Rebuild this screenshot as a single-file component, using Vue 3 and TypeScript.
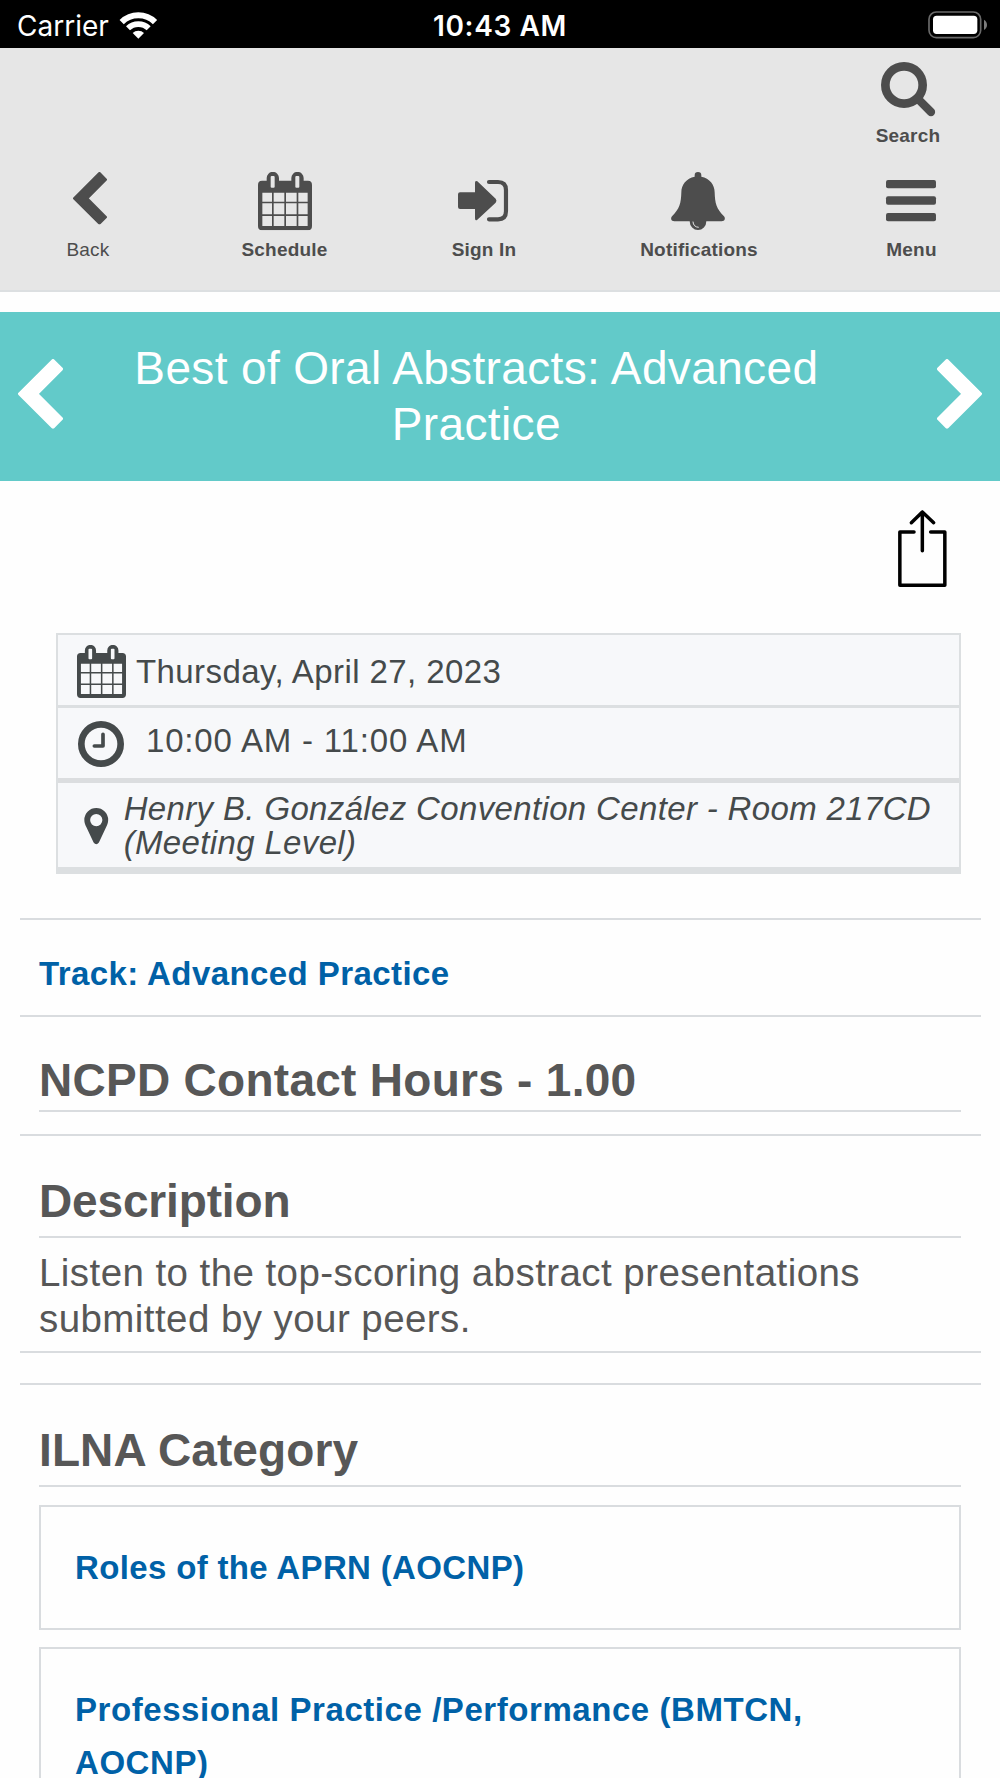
<script setup lang="ts">
interface NavItem {
  id: string
  label: string
  width: number
}

const navItems: NavItem[] = [
  { id: 'back', label: 'Back', width: 176 },
  { id: 'schedule', label: 'Schedule', width: 217 },
  { id: 'signin', label: 'Sign In', width: 182 },
  { id: 'notifications', label: 'Notifications', width: 248 },
  { id: 'menu', label: 'Menu', width: 177 },
]

const categories: string[] = [
  'Roles of the APRN (AOCNP)',
  'Professional Practice /Performance (BMTCN, AOCNP)',
]
</script>

<template>
  <div class="screen">
    <svg class="defs" width="0" height="0" aria-hidden="true">
      <symbol id="calendar" viewBox="0 0 162 175">
        <path
          fill="currentColor"
          fill-rule="evenodd"
          d="M12 26H26V18a18 18 0 0 1 37 0V26H100V18a18 18 0 0 1 37 0V26H150a12 12 0 0 1 12 12V163a12 12 0 0 1-12 12H12a12 12 0 0 1-12-12V38a12 12 0 0 1 12-12ZM38 15V44a3 3 0 0 0 3 3H47a3 3 0 0 0 3-3V15a3 3 0 0 0-3-3H41a3 3 0 0 0-3 3ZM112 15V44a3 3 0 0 0 3 3H121a3 3 0 0 0 3-3V15a3 3 0 0 0-3-3H115a3 3 0 0 0-3 3ZM13 62V89H42V62ZM47 62V89H79V62ZM84 62V89H116V62ZM121 62V89H149V62ZM13 94V127H42V94ZM47 94V127H79V94ZM84 94V127H116V94ZM121 94V127H149V94ZM13 132V162H42V132ZM47 132V162H79V132ZM84 132V162H116V132ZM121 132V162H149V132Z"
        />
      </symbol>
      <symbol id="chevron" viewBox="0 0 135 209">
        <path
          fill="currentColor"
          stroke="currentColor"
          stroke-width="10"
          stroke-linejoin="round"
          d="M105 5 130 30 56 104.500 130 179 105 204 5 104.500Z"
        />
      </symbol>
    </svg>

    <div class="status">
      <span class="carrier">Carrier</span>
      <svg class="wifi" viewBox="0 0 110 80">
        <g fill="none" stroke="#fff">
          <path stroke-width="18" d="M5 30A71 71 0 0 1 105 30" />
          <path stroke-width="17" d="M24 49A44 44 0 0 1 86 49" />
        </g>
        <path fill="#fff" d="M55 80 38 63A24 24 0 0 1 72 63Z" />
      </svg>
      <span class="clock-time">10:43 AM</span>
      <svg class="battery" viewBox="0 0 180 84">
        <rect x="3" y="3" width="155" height="77" rx="22" fill="none" stroke="#6a6a6a" stroke-width="5" />
        <rect x="15" y="14" width="133" height="55" rx="11" fill="#fff" />
        <path fill="#7c7c7c" d="M168 26C180 33 180 50 168 57Z" />
      </svg>
    </div>

    <header class="header">
      <div class="search">
        <svg class="search-icon" viewBox="0 0 164 163">
          <circle cx="69" cy="69" r="56" fill="none" stroke="currentColor" stroke-width="26" />
          <path d="M110 110 150 150" stroke="currentColor" stroke-width="25" stroke-linecap="round" />
        </svg>
        <span class="label">Search</span>
      </div>
      <nav class="nav">
        <div v-for="item in navItems" :key="item.id" class="nav-item" :style="{ width: item.width + 'px' }">
          <div class="nav-icon" :class="item.id">
            <svg v-if="item.id === 'back'"><use href="#chevron" /></svg>
            <svg v-else-if="item.id === 'schedule'"><use href="#calendar" /></svg>
            <svg v-else-if="item.id === 'signin'" viewBox="0 0 150 124">
              <path
                fill="currentColor"
                d="M6 37H51V8Q51 0 58 4L113 56Q118 62 113 68L58 119Q51 124 51 115V87H6Q0 87 0 81V43Q0 37 6 37Z"
              />
              <path
                d="M93 6H120Q144 6 144 30V94Q144 118 120 118H93"
                fill="none"
                stroke="currentColor"
                stroke-width="12.500"
                stroke-linecap="round"
              />
            </svg>
            <svg v-else-if="item.id === 'notifications'" viewBox="0 0 162 175">
              <path
                fill="currentColor"
                d="M81 0A10 10 0 0 1 91 10V14C116 19 131 38 131 61C132 94 136 110 159 133C164 139 162 148 152 148H106A25 26 0 0 1 56 148H10C0 148-2 139 3 133C26 110 30 94 31 61C31 38 46 19 71 14V10A10 10 0 0 1 81 0Z"
              />
              <path d="M66 150Q67 165 82 166" fill="none" stroke="#e6e6e6" stroke-width="3" stroke-linecap="round" />
            </svg>
            <svg v-else viewBox="0 0 150 124">
              <g fill="currentColor">
                <rect width="150" height="25" rx="6" />
                <rect y="49" width="150" height="25" rx="6" />
                <rect y="99" width="150" height="25" rx="6" />
              </g>
            </svg>
          </div>
          <span class="label" :class="{ plain: item.id === 'back' }">{{ item.label }}</span>
        </div>
      </nav>
    </header>

    <div class="banner">
      <svg class="arrow"><use href="#chevron" /></svg>
      <h1>Best of Oral Abstracts: Advanced Practice</h1>
      <svg class="arrow flip"><use href="#chevron" /></svg>
    </div>

    <div class="share-row">
      <svg class="share" viewBox="0 0 146 232">
        <g fill="none" stroke="#000" stroke-width="10.500" stroke-linecap="round" stroke-linejoin="round">
          <path d="M48 66H5.500V226H140.500V66H98" />
          <path d="M73 6V122M40 38 73 6 107 38" />
        </g>
      </svg>
    </div>

    <section class="info">
      <div class="info-row date">
        <svg class="cal"><use href="#calendar" /></svg>
        <span>Thursday, April 27, 2023</span>
      </div>
      <div class="info-row time">
        <svg class="clock" viewBox="0 0 138 138">
          <circle cx="69" cy="69" r="59" fill="none" stroke="currentColor" stroke-width="20" />
          <path
            d="M75 40V75H49"
            fill="none"
            stroke="currentColor"
            stroke-width="11"
            stroke-linecap="round"
            stroke-linejoin="round"
          />
        </svg>
        <span>10:00 AM - 11:00 AM</span>
      </div>
      <div class="info-row place">
        <svg class="pin" viewBox="0 0 74 110">
          <path
            fill="currentColor"
            fill-rule="evenodd"
            d="M37 0A36 36 0 0 1 73 36C73 45 70 51 67 57L45 104Q37 114 29 104L7 57C4 51 1 45 1 36A36 36 0 0 1 37 0ZM37 18A18.500 18.500 0 1 0 37 55A18.500 18.500 0 1 0 37 18Z"
          />
        </svg>
        <span>Henry B. González Convention Center - Room 217CD (Meeting Level)</span>
      </div>
    </section>

    <section class="block track">
      <a>Track: Advanced Practice</a>
    </section>
    <section class="block hours">
      <h2>NCPD Contact Hours - 1.00</h2>
    </section>
    <section class="block description">
      <h2>Description</h2>
      <p>Listen to the top-scoring abstract presentations submitted by your peers.</p>
    </section>
    <section class="block ilna">
      <h2>ILNA Category</h2>
      <a v-for="category in categories" :key="category" class="category">{{ category }}</a>
    </section>
  </div>
</template>

<style>
body {
  margin: 0;
  background: #fff;
}
</style>

<style scoped>
.screen {
  width: 1000px;
  height: 1778px;
  overflow: hidden;
  background: #fefefe;
  font-family: 'Liberation Sans', Arial, sans-serif;
  color: #575757;
}
.screen * {
  box-sizing: border-box;
}
svg {
  display: block;
  flex: none;
  overflow: visible;
}
.defs {
  position: absolute;
}

.status {
  height: 48px;
  display: grid;
  grid-template-columns: auto 37px 1fr 60px;
  align-items: center;
  background: #000;
  color: #fff;
  font-family: Inter, sans-serif;
  font-size: 28px;
  line-height: 48px;
  position: relative;
}
.carrier {
  padding-left: 17px;
  width: 120px;
  padding-top: 2px;
}
.wifi {
  width: 36.700px;
  height: 26.700px;
}
.clock-time {
  position: absolute;
  left: 0;
  right: 0;
  top: 2px;
  text-align: center;
  font-weight: 600;
  letter-spacing: 0.600px;
}
.battery {
  grid-column: 4;
  width: 60px;
  height: 28px;
  margin-left: -12px;
}

.header {
  height: 244px;
  padding-top: 14px;
  border-bottom: 2px solid #dcdfe1;
  background: #e6e6e6;
  color: #4d4d4d;
}
.search {
  width: 100px;
  margin-left: 858px;
  display: flex;
  flex-direction: column;
  align-items: center;
}
.search-icon {
  width: 54.700px;
  height: 54.300px;
  margin-bottom: 7.700px;
}
.label {
  font-size: 19px;
  line-height: 24px;
  font-weight: 700;
  letter-spacing: 0.200px;
  white-space: nowrap;
}
.label.plain {
  font-weight: 400;
}
.nav {
  display: flex;
  margin-top: 20px;
}
.nav-item {
  flex: none;
  display: flex;
  flex-direction: column;
  align-items: center;
}
.nav-icon {
  height: 70px;
  padding-top: 4px;
}
.nav-icon svg {
  width: 54px;
  height: 58.300px;
}
.nav-icon.back svg {
  width: 34px;
  height: 52.600px;
  margin-left: 4px;
}
.nav-icon.signin,
.nav-icon.menu {
  padding-top: 12px;
}
.nav-icon.signin svg,
.nav-icon.menu svg {
  width: 50px;
  height: 41.300px;
  margin-right: 2px;
}
.nav-icon.notifications svg {
  margin-right: 2px;
}

.banner {
  height: 169px;
  margin-top: 20px;
  padding: 29px 18px 0 17.700px;
  display: flex;
  justify-content: space-between;
  background: #62cac9;
  color: #fff;
}
.arrow {
  width: 45px;
  height: 69.700px;
  margin-top: 17.700px;
}
.arrow.flip {
  transform: scaleX(-1);
}
h1 {
  width: 802px;
  margin: 0 47px 0 0;
  font-size: 46px;
  line-height: 55.700px;
  font-weight: 400;
  letter-spacing: 0.360px;
  text-align: center;
}

.share-row {
  height: 152px;
  padding: 28.700px 53px 0 0;
  display: flex;
  justify-content: flex-end;
}
.share {
  width: 48.700px;
  height: 77.300px;
}

.info {
  width: 905px;
  margin-left: 56px;
  border: 2px solid #dcdfe1;
  border-bottom-width: 7px;
  background: #f7f8fa;
  color: #454a4b;
  font-size: 33px;
  letter-spacing: 0.420px;
}
.info-row {
  display: flex;
}
.info-row span {
  line-height: 34px;
}
.date {
  height: 73px;
  padding: 10px 0 0 19px;
  border-bottom: 3px solid #dcdfe1;
}
.date span {
  margin: 10px 0 0 10px;
}
.cal {
  width: 49px;
  height: 53px;
}
.time {
  height: 75px;
  padding: 12.700px 0 0 20.300px;
  border-bottom: 5px solid #dbdddf;
}
.time span {
  margin: 3.300px 0 0 21.700px;
  letter-spacing: 0.830px;
}
.clock {
  width: 46px;
  height: 46px;
}
.place {
  height: 84px;
  padding: 9px 20px 0 25.700px;
  font-style: italic;
  letter-spacing: 0.350px;
}
.place span {
  margin-left: 15.500px;
}
.pin {
  width: 24.500px;
  height: 36.500px;
  margin-top: 16px;
}

.block {
  margin: 0 19.500px;
  padding: 0 19.500px;
  border-top: 2px solid #d9dcdf;
}
a {
  display: block;
  color: #0061a7;
  font-size: 33px;
  font-weight: 700;
  letter-spacing: 0.350px;
}
h2 {
  margin: 0;
  border-bottom: 2px solid #d9dcdf;
  font-size: 46px;
  font-weight: 700;
  line-height: 50px;
}
.track {
  height: 97px;
  margin-top: 44px;
  padding-top: 34px;
}
.track a {
  line-height: 40px;
  letter-spacing: 0.420px;
}
.hours {
  height: 119px;
  padding-top: 38px;
}
.hours h2 {
  height: 57px;
  letter-spacing: 0.280px;
}
.description {
  height: 219px;
  padding-top: 40px;
  border-bottom: 2px solid #d9dcdf;
}
.description h2 {
  height: 62px;
  letter-spacing: -0.150px;
}
p {
  margin: 12px 0 0;
  font-size: 38.500px;
  line-height: 46.300px;
  letter-spacing: 0.430px;
}
.ilna {
  margin-top: 30px;
  padding-top: 40px;
}
.ilna h2 {
  height: 62px;
  letter-spacing: 0.100px;
}
.category {
  height: 125px;
  margin-top: 17.500px;
  padding: 34px;
  border: 2px solid #d9dcdf;
  line-height: 53px;
}
.category:last-child {
  height: 180px;
  letter-spacing: 0.560px;
}
</style>
